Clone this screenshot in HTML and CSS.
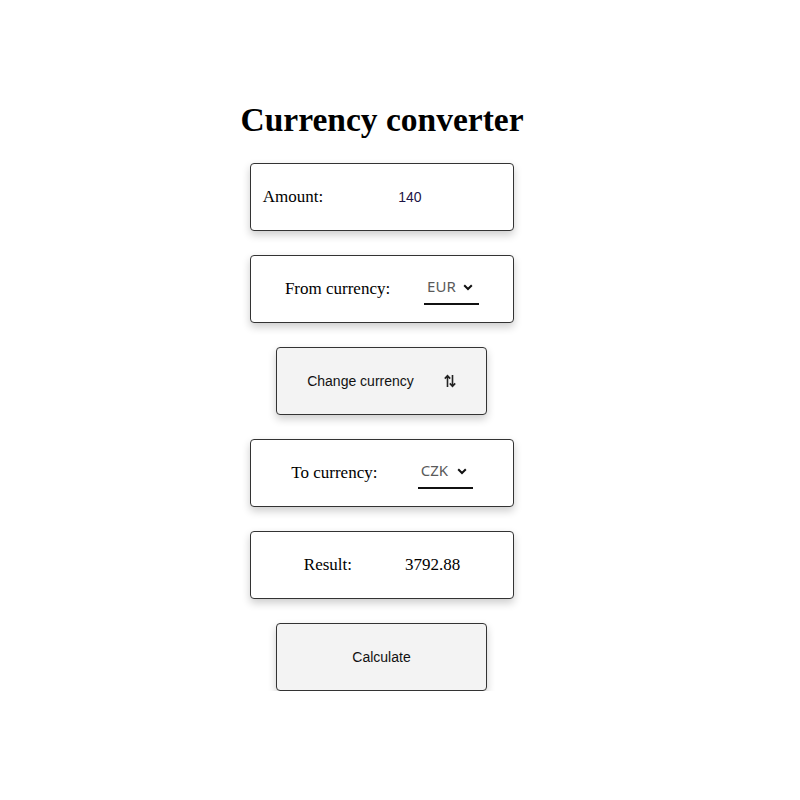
FILE: index.html
```html
<!DOCTYPE html>
<html>
<head>
<meta charset="utf-8">
<link rel="stylesheet" href="styles.css">
</head>
<body>
<div class="app">
  <h1 class="title">Currency converter</h1>
  <div class="card card-amount">
    <label class="label" for="amount">Amount:</label>
    <input class="amount-input" id="amount" type="text" value="140">
  </div>
  <div class="card">
    <label class="label">From currency:</label>
    <div class="select-wrap">
      <select class="select"><option>EUR</option></select>
      <svg class="chevron" width="10" height="7" viewBox="0 0 10 7"><path d="M1.2 1.2 L5 5 L8.8 1.2" fill="none" stroke="#111" stroke-width="2"/></svg>
    </div>
  </div>
  <button class="btn btn-swap">
    <span>Change currency</span>
    <svg class="swap-icon" width="12" height="14" viewBox="0 0 12 14"><path d="M3.5 13 V2 M0.8 4.6 L3.5 1.6 L6.2 4.6" fill="none" stroke="#222" stroke-width="1.6"/><path d="M8.5 1 V12 M5.8 9.4 L8.5 12.4 L11.2 9.4" fill="none" stroke="#222" stroke-width="1.6"/></svg>
  </button>
  <div class="card">
    <label class="label">To currency:</label>
    <div class="select-wrap">
      <select class="select"><option>CZK</option></select>
      <svg class="chevron" width="10" height="7" viewBox="0 0 10 7"><path d="M1.2 1.2 L5 5 L8.8 1.2" fill="none" stroke="#111" stroke-width="2"/></svg>
    </div>
  </div>
  <div class="card">
    <span class="label">Result:</span>
    <span class="label">3792.88</span>
  </div>
  <button class="btn">Calculate</button>
</div>
</body>
</html>
```
FILE: styles.css
```css
html, body {
  margin: 0;
  padding: 0;
  background: #fff;
}
.app {
  width: 264px;
  margin-left: 250px;
  padding-top: 98px;
  display: flex;
  flex-direction: column;
  align-items: center;
  gap: 24px;
}
.title {
  font-family: "Liberation Serif", serif;
  font-weight: bold;
  font-size: 33.5px;
  line-height: 44px;
  margin: 0 -40px -3px;
  white-space: nowrap;
  color: #000;
}
.card {
  box-sizing: border-box;
  width: 264px;
  height: 68px;
  border: 1px solid #333;
  border-radius: 4px;
  box-shadow: 0 4px 8px rgba(0,0,0,0.2);
  display: flex;
  align-items: center;
  justify-content: space-evenly;
  background: #fff;
}
.label {
  font-family: "Liberation Serif", serif;
  font-size: 17px;
  color: #000;
}
.amount-input {
  box-sizing: border-box;
  width: 166px;
  border: none;
  outline: none;
  padding: 0 0 0 63px;
  font-family: "Liberation Sans", Arial, sans-serif;
  font-size: 14px;
  color: #1d1445;
  background: transparent;
}
.select-wrap {
  position: relative;
  display: flex;
  align-items: center;
  border-bottom: 2px solid #111;
  height: 28px;
  margin-top: 2px;
}
.select {
  appearance: none;
  -webkit-appearance: none;
  border: none;
  outline: none;
  background: transparent;
  font-family: "Noto Sans", "Liberation Sans", sans-serif;
  font-size: 15px;
  color: #5a5a5a;
  width: 55px;
  padding: 0 0 6px 3px;
  margin: 0;
}
.chevron {
  position: absolute;
  right: 6px;
  top: 9px;
  pointer-events: none;
}
.btn {
  box-sizing: border-box;
  width: 211px;
  height: 68px;
  margin-right: 1px;
  border: 1px solid #333;
  border-radius: 4px;
  background: #f3f3f3;
  box-shadow: 0 4px 8px rgba(0,0,0,0.2);
  font-family: "Liberation Sans", Arial, sans-serif;
  font-size: 14px;
  color: #111;
  display: flex;
  align-items: center;
  justify-content: center;
  padding: 0;
}
.btn-swap {
  gap: 30px;
  padding-left: 0;
}
.swap-icon {
  display: block;
}
```
